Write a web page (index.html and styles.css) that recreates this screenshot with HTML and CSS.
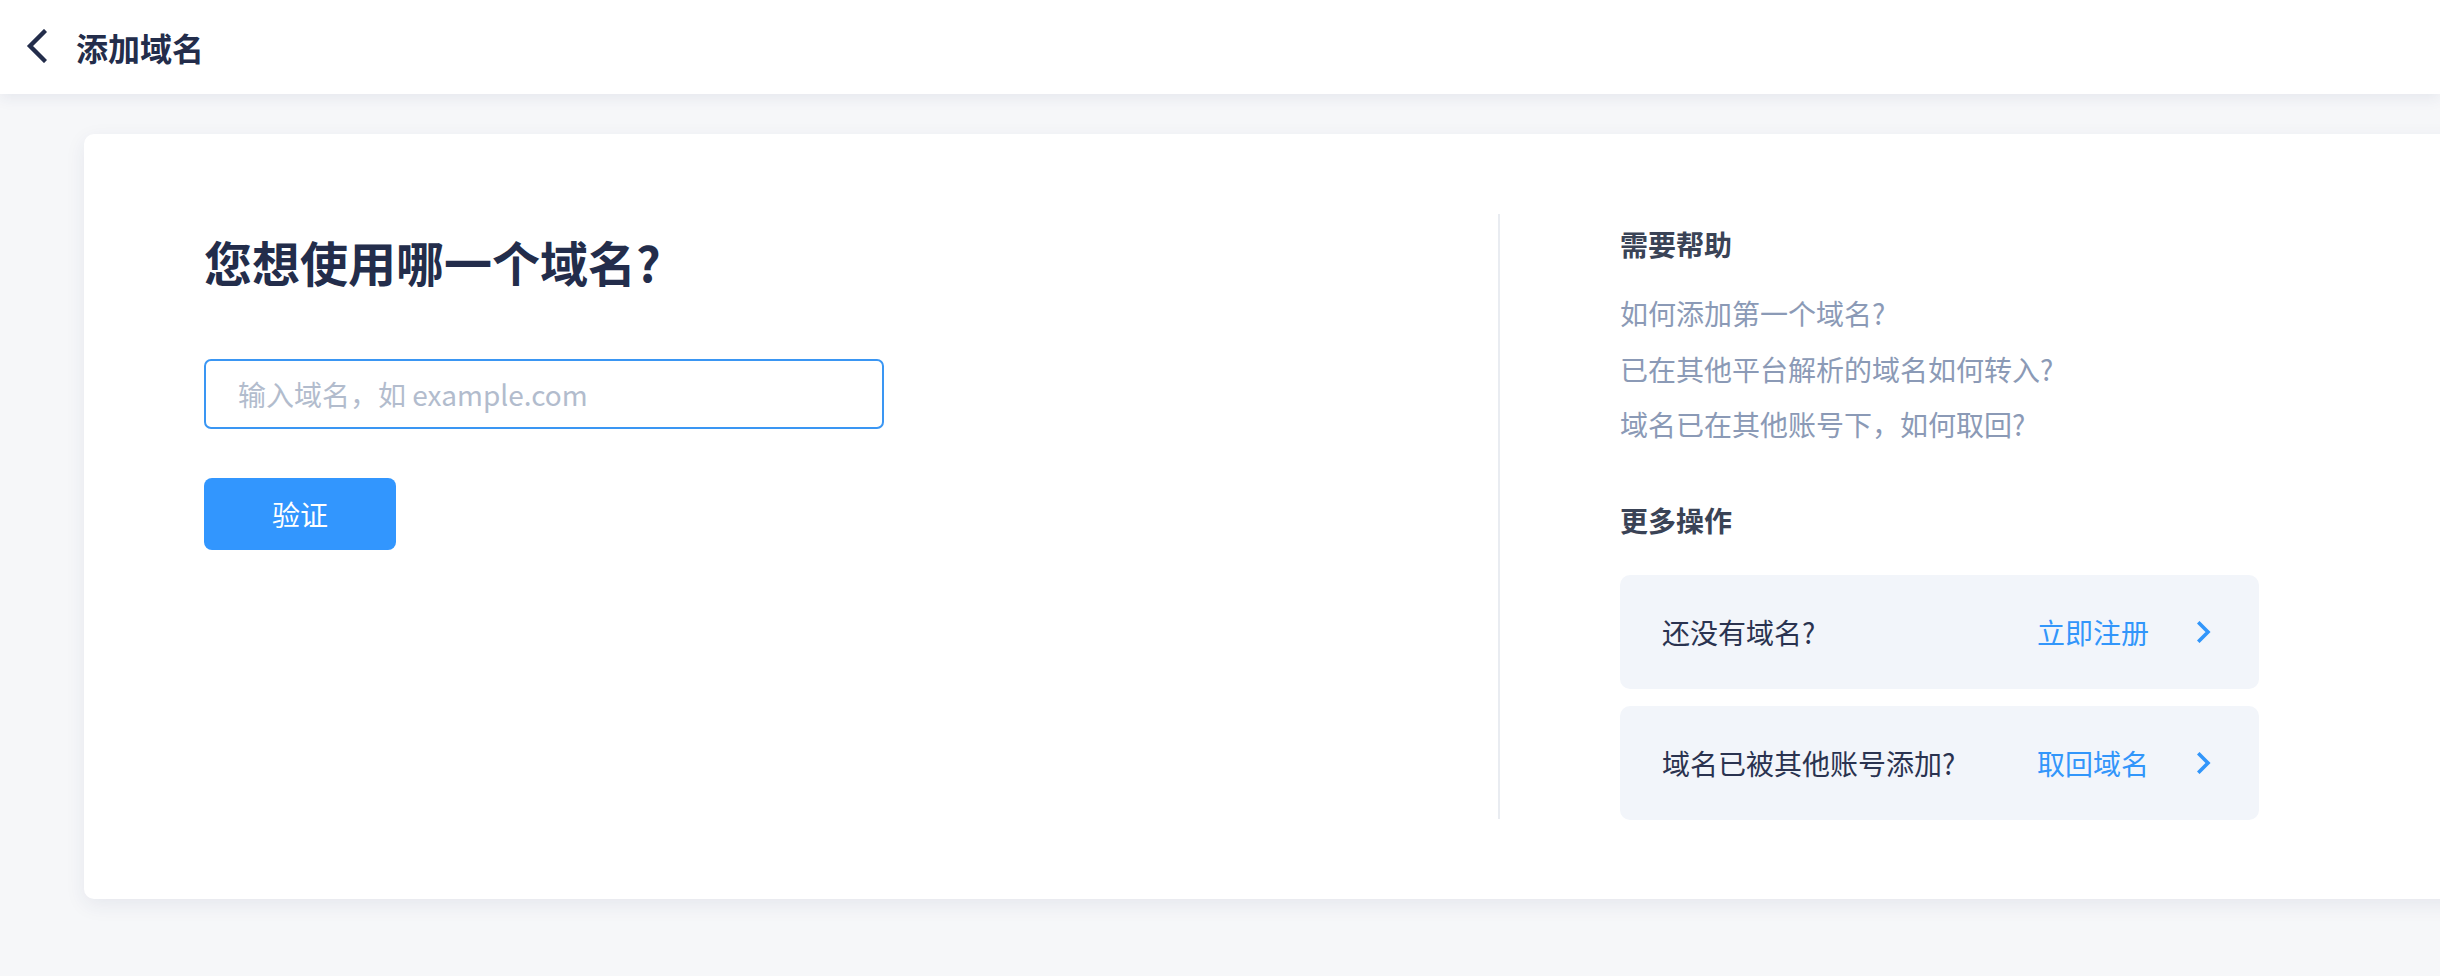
FILE: index.html
```html
<!DOCTYPE html>
<html lang="zh-CN">
<head>
<meta charset="utf-8">
<title>添加域名</title>
<link rel="stylesheet" href="styles.css">
</head>
<body>
<header class="topbar">
  <span class="back">
    <svg width="22" height="34" viewBox="0 0 22 34"><path d="M19 3 L5 17 L19 31" fill="none" stroke="#232d4b" stroke-width="4.4" stroke-linecap="square"/></svg>
  </span>
  <h1 class="page-title">添加域名</h1>
</header>
<main class="main">
  <section class="card">
    <div class="left">
      <h2 class="question">您想使用哪一个域名?</h2>
      <input class="domain-input" type="text" placeholder="输入域名，如 example.com">
      <button class="verify">验证</button>
    </div>
    <div class="divider"></div>
    <div class="right">
      <h3 class="section-title">需要帮助</h3>
      <ul class="help-list">
        <li>如何添加第一个域名?</li>
        <li>已在其他平台解析的域名如何转入?</li>
        <li>域名已在其他账号下，如何取回?</li>
      </ul>
      <h3 class="section-title more">更多操作</h3>
      <div class="action">
        <span class="action-label">还没有域名?</span>
        <span class="action-link">立即注册</span>
        <svg class="chev" width="14" height="22" viewBox="0 0 14 22"><path d="M2.5 2.5 L11 11 L2.5 19.5" fill="none" stroke="#3296fa" stroke-width="3.6" stroke-linecap="square"/></svg>
      </div>
      <div class="action">
        <span class="action-label">域名已被其他账号添加?</span>
        <span class="action-link">取回域名</span>
        <svg class="chev" width="14" height="22" viewBox="0 0 14 22"><path d="M2.5 2.5 L11 11 L2.5 19.5" fill="none" stroke="#3296fa" stroke-width="3.6" stroke-linecap="square"/></svg>
      </div>
    </div>
  </section>
</main>
</body>
</html>
```

FILE: styles.css
```css
* { box-sizing: border-box; }
html, body {
  margin: 0;
  padding: 0;
}
body {
  width: 2440px;
  height: 976px;
  overflow: hidden;
  background: #f6f7f9;
  font-family: "Noto Sans CJK SC", "Noto Sans", sans-serif;
  color: #27304a;
}
.topbar {
  position: relative;
  z-index: 2;
  height: 94px;
  background: #ffffff;
  display: flex;
  align-items: center;
  padding-left: 25px;
  box-shadow: 0 4px 14px rgba(40, 55, 100, 0.08);
}
.back {
  display: flex;
  width: 22px;
  height: 34px;
  margin-top: -2px;
}
.page-title {
  margin: 0 0 0 29px;
  font-size: 32px;
  font-weight: 600;
  color: #232d4b;
  line-height: 1;
}
.main {
  padding: 40px 0 0 84px;
}
.card {
  width: 2420px;
  height: 765px;
  background: #ffffff;
  border-radius: 10px;
  box-shadow: 0 6px 20px rgba(40, 55, 100, 0.08);
  display: flex;
  padding: 80px 0;
}
.left {
  width: 1414px;
  padding: 13px 0 0 120px;
  display: flex;
  flex-direction: column;
  align-items: flex-start;
}
.question {
  margin: 0;
  font-size: 48px;
  line-height: 68px;
  font-weight: 600;
  color: #232d4b;
}
.domain-input {
  margin-top: 64px;
  width: 680px;
  height: 70px;
  border: 2px solid #3a96f3;
  border-radius: 7px;
  padding: 0 0 0 32px;
  font-family: "Noto Sans CJK SC", "Noto Sans", sans-serif;
  font-size: 28px;
  color: #27304a;
  outline: none;
  background: #fff;
}
.domain-input::placeholder {
  color: #b2bccd;
}
.verify {
  margin-top: 49px;
  width: 192px;
  height: 72px;
  border: none;
  border-radius: 8px;
  background: #3296fe;
  color: #ffffff;
  font-family: "Noto Sans CJK SC", "Noto Sans", sans-serif;
  font-size: 28px;
  padding: 0;
}
.divider {
  width: 2px;
  background: #e9ecf1;
}
.right {
  padding: 10px 0 0 120px;
  width: 760px;
}
.section-title {
  margin: 0;
  font-size: 28px;
  line-height: 40px;
  font-weight: 600;
  color: #3a4356;
}
.help-list {
  list-style: none;
  margin: 29px 0 0;
  padding: 0;
}
.help-list li {
  font-size: 28px;
  line-height: 40px;
  color: #8b9ab6;
  margin-bottom: 16px;
}
.help-list li:nth-child(3) { margin-top: -1px; }
.section-title.more {
  margin-top: 56px;
}
.action {
  margin-top: 35px;
  width: 639px;
  height: 114px;
  background: #f2f5fa;
  border-radius: 10px;
  display: flex;
  align-items: center;
  padding: 0 48px 0 42px;
}
.action + .action {
  margin-top: 17px;
}
.action-label {
  flex: 1;
  font-size: 28px;
  color: #2a3350;
}
.action-link {
  font-size: 28px;
  color: #3296fa;
}
.chev {
  margin-left: 48px;
  flex: none;
}
```
